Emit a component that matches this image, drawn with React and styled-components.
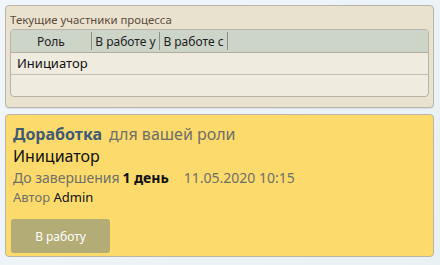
import React from 'react';
import styled, { createGlobalStyle } from 'styled-components';

const Global = createGlobalStyle`
	html, body {
		margin: 0;
		padding: 0;
	}
	body {
		width: 440px;
		height: 265px;
		overflow: hidden;
		background: linear-gradient(135deg, #f1f6fa 0%, #e9f1f5 100%);
		font-family: 'Noto Sans', 'Open Sans', sans-serif;
	}
`;

const columns = [
	{ title: 'Роль', width: 80 },
	{ title: 'В работе у', width: 67 },
	{ title: 'В работе с', width: 67 },
];

const rows = [['Инициатор', '', ''], ['', '', '']];

export default function App() {
	return (
		<Page>
			<Global />
			<Participants>
				<Caption>Текущие участники процесса</Caption>
				<Table>
					<HeaderRow>
						{columns.map((c) => (
							<HeaderCell key={c.title} style={{ width: c.width }}>
								{c.title}
							</HeaderCell>
						))}
						<Filler />
					</HeaderRow>
					{rows.map((r, i) => (
						<Row key={i} last={i === rows.length - 1}>
							{r[0]}
						</Row>
					))}
				</Table>
			</Participants>
			<Task>
				<TitleLine>
					<Strong>Доработка</Strong>
					<Muted>для вашей роли</Muted>
				</TitleLine>
				<RoleName>Инициатор</RoleName>
				<Deadline>
					<span>До завершения</span>
					<b>1 день</b>
					<Date>11.05.2020 10:15</Date>
				</Deadline>
				<Author>
					Автор <span>Admin</span>
				</Author>
				<Button>В работу</Button>
			</Task>
		</Page>
	);
}

const Page = styled.div`
	padding: 5px 6px 0 5px;
	display: flex;
	flex-direction: column;
	gap: 6px;
`;

const Participants = styled.div`
	background: #e8e2cf;
	border: 1px solid #b9b5aa;
	border-radius: 4px;
	padding: 5px 4px 10px 4px;
	box-shadow: 0 1px 1px rgba(0, 0, 0, 0.08);
`;

const Caption = styled.div`
	font-size: 11.4px;
	line-height: 17px;
	color: #5e4a3c;
	margin-bottom: 1px;
`;

const Table = styled.div`
	border: 1px solid #b7b3a7;
	border-radius: 4px;
	background: #efebdf;
	overflow: hidden;
`;

const HeaderRow = styled.div`
	display: flex;
	height: 22px;
	background: #cdd4c8;
	border-bottom: 1px solid #b1ada1;
	font-size: 12px;
	color: #222;
`;

const HeaderCell = styled.div`
	flex: none;
	display: flex;
	align-items: center;
	justify-content: center;
	border-right: 1px solid #8f8f88;
	margin: 2px 0;
	white-space: nowrap;
`;

const Filler = styled.div`
	flex: 1;
`;

const Row = styled.div`
	height: 21px;
	line-height: 21px;
	padding-left: 6px;
	font-size: 13px;
	color: #111;
	border-bottom: ${(p) => (p.last ? 'none' : '1px solid #c4c0b4')};
`;

const Task = styled.div`
	background: #fcdb6c;
	border: 1px solid #b9b4a4;
	border-radius: 4px;
	padding: 8px 7px 3px 5px;
	display: flex;
	flex-direction: column;
	align-items: flex-start;
`;

const TitleLine = styled.div`
	display: flex;
	gap: 7px;
	font-size: 16px;
	line-height: 22px;
	padding-left: 2px;
`;

const Strong = styled.span`
	font-weight: 700;
	color: #3f5a72;
`;

const Muted = styled.span`
	color: #6e6e6a;
`;

const RoleName = styled.div`
	font-size: 16px;
	line-height: 22px;
	color: #111;
	padding-left: 2px;
`;

const Deadline = styled.div`
	display: flex;
	gap: 3px;
	font-size: 14px;
	line-height: 21px;
	color: #6f6f6a;
	padding-left: 2px;
	b {
		color: #111;
		font-weight: 700;
	}
`;

const Date = styled.span`
	margin-left: 12px;
`;

const Author = styled.div`
	font-size: 13px;
	line-height: 19px;
	color: #6f6f6a;
	padding-left: 2px;
	span {
		color: #111;
	}
`;

const Button = styled.button`
	margin-top: 12px;
	width: 99px;
	height: 34px;
	border: none;
	border-radius: 3px;
	background: #b3ac76;
	color: #fff;
	font-family: inherit;
	font-size: 12px;
	cursor: pointer;
`;
